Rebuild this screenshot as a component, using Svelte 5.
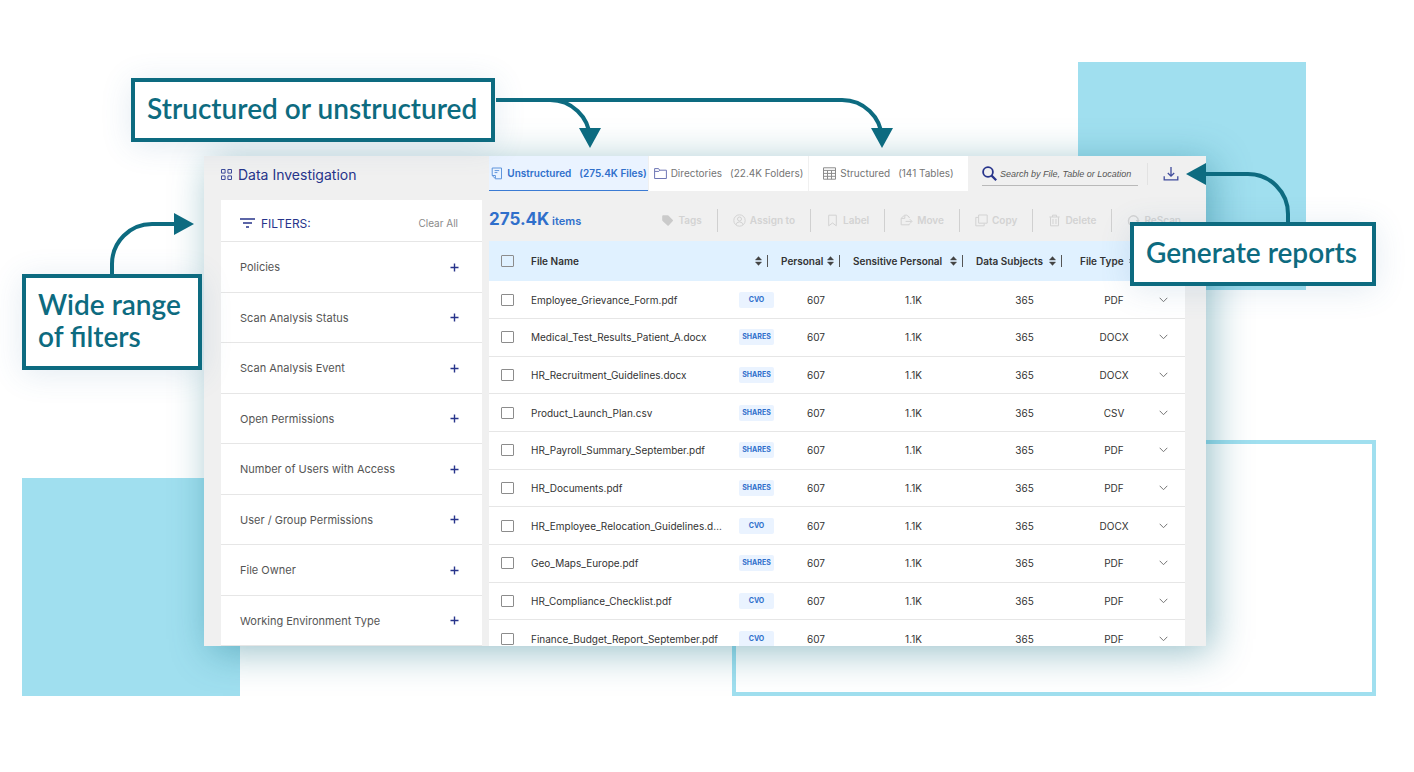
<script>
  const filters = [
    'Policies',
    'Scan Analysis Status',
    'Scan Analysis Event',
    'Open Permissions',
    'Number of Users with Access',
    'User / Group Permissions',
    'File Owner',
    'Working Environment Type'
  ];

  const tabs = [
    { id: 'file', name: 'Unstructured', count: '(275.4K Files)' },
    { id: 'folder', name: 'Directories', count: '(22.4K Folders)' },
    { id: 'table', name: 'Structured', count: '(141 Tables)' }
  ];

  const actions = ['Tags', 'Assign to', 'Label', 'Move', 'Copy', 'Delete', 'ReScan'];

  const rows = [
    ['Employee_Grievance_Form.pdf', 'CVO', 'PDF'],
    ['Medical_Test_Results_Patient_A.docx', 'SHARES', 'DOCX'],
    ['HR_Recruitment_Guidelines.docx', 'SHARES', 'DOCX'],
    ['Product_Launch_Plan.csv', 'SHARES', 'CSV'],
    ['HR_Payroll_Summary_September.pdf', 'SHARES', 'PDF'],
    ['HR_Documents.pdf', 'SHARES', 'PDF'],
    ['HR_Employee_Relocation_Guidelines.docx', 'CVO', 'DOCX'],
    ['Geo_Maps_Europe.pdf', 'SHARES', 'PDF'],
    ['HR_Compliance_Checklist.pdf', 'CVO', 'PDF'],
    ['Finance_Budget_Report_September.pdf', 'CVO', 'PDF']
  ];

  let active = $state('file');
</script>

{#snippet heading(label)}
  <button class="sort">
    <span>{label}</span>
    <svg width="7" height="10" viewBox="0 0 7 10" aria-hidden="true">
      <path d="M3.5.6 6.6 4H.4zM3.5 9.4.4 6h6.2z" fill="#444" stroke="#444" stroke-width=".4" stroke-linejoin="round" />
    </svg>
  </button>
{/snippet}

<div class="stage">
  <div class="block block-right"></div>
  <div class="block block-left"></div>
  <div class="frame"></div>

  <main class="window">
    <aside>
      <h1>
        <svg width="11" height="11" viewBox="0 0 11 11" fill="none" stroke="#3f4b9b" aria-hidden="true">
          <path d="M.5.5h3.6v3.6H.5zM6.9.5h3.6v3.6H6.9zM.5 6.9h3.6v3.6H.5zM6.9 6.9h3.6v3.6H6.9z" />
        </svg>
        Data Investigation
      </h1>
      <section class="filters">
        <header>
          <svg width="15" height="10" viewBox="0 0 15 10" stroke="#27348b" stroke-width="1.4" aria-hidden="true">
            <path d="M0 1h15M3 5h9M6 9h3" />
          </svg>
          <h2>FILTERS:</h2>
          <button class="clear">Clear All</button>
        </header>
        <ul>
          {#each filters as filter}
            <li>
              <button>
                {filter}
                <svg width="9" height="9" viewBox="0 0 9 9" stroke="#27348b" stroke-width="1.4" aria-hidden="true">
                  <path d="M4.5.5v8M.5 4.5h8" />
                </svg>
              </button>
            </li>
          {/each}
        </ul>
      </section>
    </aside>

    <section class="content">
      <div class="topbar">
        <nav>
          {#each tabs as tab}
            <button class="tab" class:active={active === tab.id} onclick={() => (active = tab.id)}>
              <svg width="13" height="13" viewBox="0 0 13 13" fill="none" stroke-width="1" aria-hidden="true">
                {#if tab.id === 'file'}
                  <path d="M2.2 7V1h9.3v10.8H5.6L2.2 8.6zM2.2 8.5h3.2v3.1M4.6 3.6h4.6M4.6 5.6h2.8" stroke="#5f95dc" />
                {:else if tab.id === 'folder'}
                  <path d="M.6 1.6h4l1 1.6h6.8v8.3H.6zM.6 4.4h4.2l1-1.2" stroke="#6e76b4" />
                {:else}
                  <path d="M.5.8h12v11.4H.5zM.5 3.4h12M.5 6.4h12M.5 9.3h12M4.5 3.4v8.8M8.5 3.4v8.8" stroke="#8c8c8c" />
                {/if}
              </svg>
              <span>{tab.name}</span>
              <span class="count">{tab.count}</span>
            </button>
          {/each}
        </nav>
        <label class="search">
          <svg width="15" height="15" viewBox="0 0 15 15" fill="none" stroke="#27348b" aria-hidden="true">
            <circle cx="6" cy="6" r="4.9" stroke-width="1.8" />
            <path d="m9.6 9.6 4.6 4.6" stroke-width="2.2" />
          </svg>
          <input type="text" placeholder="Search by File, Table or Location" aria-label="Search" />
        </label>
        <button class="download" aria-label="Download report">
          <svg width="16" height="16" viewBox="0 0 16 16" fill="none" stroke="#3f4b9b" stroke-width="1.3" aria-hidden="true">
            <path d="M8 1v9M4.8 7 8 10.2 11.2 7M1.2 10.2v3.6h13.6v-3.6" />
          </svg>
        </button>
      </div>

      <div class="toolbar">
        <p class="total"><strong>275.4K</strong> items</p>
        <div class="actions">
          {#each actions as action}
            <button disabled>
              <svg width="13" height="13" viewBox="0 0 13 13" fill="none" stroke="currentColor" aria-hidden="true">
                {#if action === 'Tags'}
                  <path d="M1.2 2.2q0-1 1-1h4.2q.6 0 1 .4l4.4 4.3q.6.6 0 1.2l-4.1 4.3q-.6.6-1.2 0L1.6 7.1q-.4-.4-.4-1z" fill="#cacaca" stroke="none" />
                {:else if action === 'Assign to'}
                  <circle cx="6.5" cy="6.5" r="5.7" />
                  <circle cx="6.5" cy="5" r="2" />
                  <path d="M3 10.8q.4-2.9 3.5-2.9t3.5 2.9" />
                {:else if action === 'Label'}
                  <path d="M2.7 1.2h7.6v10.6L6.5 9l-3.8 2.8z" />
                {:else if action === 'Move'}
                  <path d="M9.2 4V3L6.8 1.2H4.6L1.2 4.2v6.6h8v-1M1.4 4.4h3.4V1.4M5.6 7.4h6M9.8 5.2 12 7.4 9.8 9.6" />
                {:else if action === 'Copy'}
                  <path d="M3.6 1h8.6v8.2H3.6zM3.4 3.4H.8v8.4h8.4V9.4" />
                {:else if action === 'Delete'}
                  <path d="M1.4 3h10.2M4.5 3V1.2h4V3M2.5 3.2v8.6h8V3.2M5 5v5M8 5v5" />
                {:else}
                  <path d="M3.6 11A5 5 0 1 1 11.4 6.6" stroke-width="1.4" />
                  <path d="M8.6 6h4.2l-2 3z" fill="currentColor" stroke="none" />
                {/if}
              </svg>
              {action}
            </button>
          {/each}
        </div>
      </div>

      <table>
        <colgroup>
          <col class="c-check" />
          <col />
          <col class="c-tag" />
          <col class="c-personal" />
          <col class="c-sensitive" />
          <col class="c-subjects" />
          <col class="c-type" />
          <col class="c-more" />
        </colgroup>
        <thead>
          <tr>
            <th class="check"><input type="checkbox" aria-label="Select all files" /></th>
            <th class="name" colspan="2">{@render heading('File Name')}</th>
            <th>{@render heading('Personal')}</th>
            <th>{@render heading('Sensitive Personal')}</th>
            <th>{@render heading('Data Subjects')}</th>
            <th class="type">{@render heading('File Type')}</th>
            <th></th>
          </tr>
        </thead>
        <tbody>
          {#each rows as [name, tag, type]}
            <tr>
              <td class="check"><input type="checkbox" aria-label="Select {name}" /></td>
              <td class="name">{name}</td>
              <td class="tag"><span>{tag}</span></td>
              <td class="value">607</td>
              <td class="value">1.1K</td>
              <td class="value">365</td>
              <td class="value">{type}</td>
              <td class="more">
                <button aria-label="Show details">
                  <svg width="9" height="6" viewBox="0 0 9 6" fill="none" stroke="#777" aria-hidden="true">
                    <path d="m.7.8 3.8 3.9L8.3.8" />
                  </svg>
                </button>
              </td>
            </tr>
          {/each}
        </tbody>
      </table>
    </section>
  </main>

  <p class="callout callout-tabs">Structured or unstructured</p>
  <p class="callout callout-filters">Wide range<br />of filters</p>
  <p class="callout callout-reports">Generate reports</p>

  <svg class="arrow arrow-tabs" width="398" height="52" viewBox="0 0 398 52" aria-hidden="true">
    <path d="M0 4h346a40 40 0 0 1 40 38M54 4a40 40 0 0 1 40 38" />
    <path class="head" d="M83 32h22L94 52zM375 32h22l-11 20z" />
  </svg>
  <svg class="arrow arrow-filters" width="86" height="62" viewBox="0 0 86 62" aria-hidden="true">
    <path d="M4 62V52a40 40 0 0 1 40-40h24" />
    <path class="head" d="M66 1v22l20-11z" />
  </svg>
  <svg class="arrow arrow-reports" width="106" height="60" viewBox="0 0 106 60" aria-hidden="true">
    <path d="M102 60V52a40 40 0 0 0-40-40H18" />
    <path class="head" d="M20 1v22L0 12z" />
  </svg>
</div>

<style>
  :global(body) {
    margin: 0;
    background: #fff;
  }

  .stage {
    --teal: #0d6b80;
    --sky: #a0dfef;
    --navy: #27348b;
    --blue: #2f6fcb;
    position: relative;
    box-sizing: border-box;
    min-height: 100vh;
    padding: 156px 208px 126px 204px;
    overflow: hidden;
    font-family: Inter, "Liberation Sans", sans-serif;
    font-size: 10px;
    color: #333;
  }

  button {
    margin: 0;
    padding: 0;
    border: 0;
    background: none;
    font: inherit;
    color: inherit;
  }

  svg {
    display: block;
    flex: none;
  }

  .block {
    position: absolute;
    background: var(--sky);
  }

  .block-right {
    top: 62px;
    right: 108px;
    width: 228px;
    height: 228px;
  }

  .block-left {
    top: 478px;
    left: 22px;
    width: 218px;
    height: 218px;
  }

  .frame {
    position: absolute;
    box-sizing: border-box;
    top: 440px;
    left: 732px;
    right: 38px;
    height: 256px;
    border: 4px solid var(--sky);
  }

  .window {
    position: relative;
    display: grid;
    grid-template-columns: 261px minmax(0, 1fr);
    gap: 7px;
    box-sizing: border-box;
    max-height: 490px;
    padding: 0 21px 0 17px;
    overflow: hidden;
    background: #f0f0f0;
    box-shadow: 6px 6px 36px rgba(13, 107, 128, 0.42);
  }

  aside {
    display: flex;
    flex-direction: column;
    height: 490px;
  }

  h1 {
    display: flex;
    align-items: center;
    gap: 6px;
    height: 36px;
    margin: 0 0 8px;
    font-size: 14px;
    font-weight: 400;
    color: var(--navy);
  }

  .filters {
    display: flex;
    flex: 1;
    flex-direction: column;
    background: #fff;
  }

  .filters header {
    display: flex;
    align-items: center;
    gap: 6px;
    height: 42px;
    padding: 5px 24px 0 19px;
    box-sizing: border-box;
    border-bottom: 1px solid #e6e6e6;
  }

  h2 {
    margin: 0;
    font-size: 12px;
    font-weight: 400;
    color: var(--navy);
  }

  .clear {
    margin-left: auto;
    color: #8a8a8a;
  }

  ul {
    display: flex;
    flex: 1;
    flex-direction: column;
    margin: 0;
    padding: 0;
    list-style: none;
  }

  li {
    display: flex;
    flex: 1;
    border-bottom: 1px solid #e6e6e6;
  }

  li button {
    display: flex;
    flex: 1;
    align-items: center;
    justify-content: space-between;
    padding: 1px 23px 0 19px;
    font-size: 11px;
    color: #555;
  }

  .content {
    min-width: 0;
  }

  .topbar {
    display: flex;
    height: 35px;
  }

  nav {
    display: flex;
    flex: 479 1 0;
    gap: 1px;
  }

  .tab {
    display: flex;
    flex: 1;
    align-items: center;
    justify-content: center;
    gap: 4px;
    border-bottom: 1px solid #fff;
    background: #fff;
    color: #757575;
    white-space: nowrap;
  }

  .tab.active {
    border-color: #3b7bd4;
    background: #eaf3ff;
    font-weight: 600;
    color: var(--blue);
  }

  .count {
    margin-left: 4px;
  }

  .search {
    display: flex;
    flex: 156 1 0;
    align-items: center;
    gap: 3px;
    box-sizing: border-box;
    min-width: 0;
    height: 24px;
    margin: 6px 9px 0 14px;
    border-bottom: 1px solid #b9b9b9;
  }

  .search input {
    flex: 1;
    min-width: 0;
    padding: 0;
    border: 0;
    outline: 0;
    background: none;
    font: italic 9px "Liberation Sans", sans-serif;
    color: #333;
  }

  .search input::placeholder {
    color: #555;
    opacity: 1;
  }

  .download {
    height: 22px;
    margin-top: 7px;
    padding: 0 6px 0 15px;
    border-left: 1px solid #e2e2e2;
  }

  .toolbar {
    display: flex;
    align-items: center;
    justify-content: space-between;
    height: 50px;
    padding-top: 8px;
    box-sizing: border-box;
  }

  .total {
    margin: 0;
    padding-bottom: 3px;
    font-size: 11px;
    font-weight: 600;
    color: var(--blue);
    white-space: nowrap;
  }

  .total strong {
    font-size: 17px;
    font-weight: 700;
  }

  .actions {
    display: flex;
    padding-right: 4px;
  }

  .actions button {
    display: flex;
    align-items: center;
    gap: 4px;
    height: 23px;
    padding: 0 15px;
    border-right: 1px solid #d0d0d0;
    font-weight: 600;
    color: #d3d3d3;
    white-space: nowrap;
  }

  .actions button:last-child {
    padding-right: 0;
    border: 0;
  }

  table {
    width: 100%;
    height: 417px;
    border-collapse: collapse;
    table-layout: fixed;
    background: #fff;
  }

  .c-check {
    width: 36px;
  }

  .c-tag {
    width: 29px;
  }

  .c-personal {
    width: 72px;
  }

  .c-sensitive {
    width: 123px;
  }

  .c-subjects {
    width: 99px;
  }

  .c-type {
    width: 80px;
  }

  .c-more {
    width: 43px;
  }

  th,
  td {
    padding: 0;
  }

  thead tr {
    height: 40px;
    background: #e0f1ff;
  }

  th {
    padding-left: 13px;
    text-align: left;
  }

  th.name,
  td.name {
    padding-left: 6px;
  }

  th.type {
    padding-left: 18px;
  }

  th.check,
  td.check {
    padding-left: 12px;
    text-align: left;
  }

  .sort {
    display: flex;
    align-items: center;
    justify-content: space-between;
    width: 100%;
    height: 12px;
    padding-right: 5px;
    border-right: 1px solid #555;
    font-weight: 600;
    color: #333;
    white-space: nowrap;
  }

  tbody tr {
    height: 37px;
    border-bottom: 1px solid #e6e6e6;
  }

  td.name {
    padding-right: 14px;
    overflow: hidden;
    text-overflow: ellipsis;
    white-space: nowrap;
  }

  .tag span {
    display: block;
    width: 35px;
    border-radius: 2px;
    background: #eaf3ff;
    font-size: 7px;
    line-height: 16px;
    font-weight: 700;
    text-align: center;
    color: var(--blue);
  }

  .value {
    padding-left: 24px;
    text-align: center;
  }

  .more button {
    display: block;
    margin: 0 auto;
  }

  input[type="checkbox"] {
    display: block;
    appearance: none;
    box-sizing: border-box;
    width: 13px;
    height: 12px;
    margin: 0;
    border: 1px solid #8c8c8c;
    border-radius: 1px;
    background: #fff;
  }

  th input[type="checkbox"] {
    background: transparent;
  }

  .callout {
    position: absolute;
    margin: 0;
    padding: 10px 12px 14px;
    border: 4px solid var(--teal);
    background: #fff;
    box-shadow: 0 4px 32px rgba(60, 110, 160, 0.14);
    box-sizing: border-box;
    font-family: Lato, sans-serif;
    font-size: 28px;
    font-weight: 600;
    line-height: 32px;
    color: var(--teal);
    white-space: nowrap;
  }

  .callout-tabs {
    top: 78px;
    left: 131px;
    width: 364px;
  }

  .callout-filters {
    top: 274px;
    left: 22px;
    width: 180px;
  }

  .callout-reports {
    top: 222px;
    right: 38px;
    width: 246px;
  }

  .arrow {
    position: absolute;
    fill: none;
    stroke: var(--teal);
    stroke-width: 4;
  }

  .head {
    fill: var(--teal);
    stroke: none;
  }

  .arrow-tabs {
    top: 96px;
    left: 496px;
  }

  .arrow-filters {
    top: 212px;
    left: 108px;
  }

  .arrow-reports {
    top: 162px;
    right: 122px;
  }
</style>
